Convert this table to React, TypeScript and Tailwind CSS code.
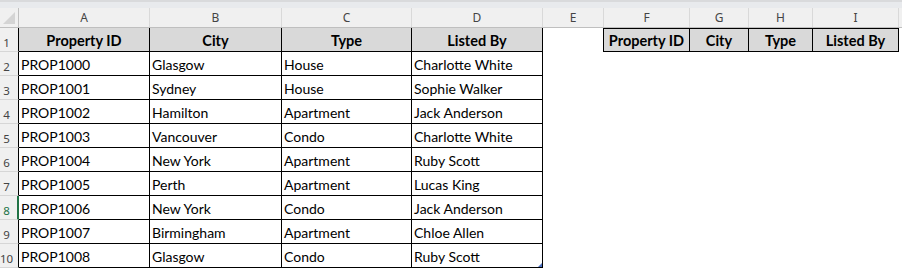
const rows = [
  ["PROP1000", "Glasgow", "House", "Charlotte White"],
  ["PROP1001", "Sydney", "House", "Sophie Walker"],
  ["PROP1002", "Hamilton", "Apartment", "Jack Anderson"],
  ["PROP1003", "Vancouver", "Condo", "Charlotte White"],
  ["PROP1004", "New York", "Apartment", "Ruby Scott"],
  ["PROP1005", "Perth", "Apartment", "Lucas King"],
  ["PROP1006", "New York", "Condo", "Jack Anderson"],
  ["PROP1007", "Birmingham", "Apartment", "Chloe Allen"],
  ["PROP1008", "Glasgow", "Condo", "Ruby Scott"],
];

const letters = [
  { l: "A", w: "w-[131px]" },
  { l: "B", w: "w-[132px]" },
  { l: "C", w: "w-[130px]" },
  { l: "D", w: "w-[131px]" },
  { l: "E", w: "w-[61px]" },
  { l: "F", w: "w-[86px]" },
  { l: "G", w: "w-[59px]" },
  { l: "H", w: "w-[64px]" },
  { l: "I", w: "w-[86px]" },
];

const dataW = ["w-[131px]", "w-[132px]", "w-[130px]", "w-[131px]"];
const headers = ["Property ID", "City", "Type", "Listed By"];
const extraHeaders = [
  { t: "Property ID", w: "w-[86px]" },
  { t: "City", w: "w-[59px]" },
  { t: "Type", w: "w-[64px]" },
  { t: "Listed By", w: "w-[86px]" },
];

const RowNum = ({ n, active }: { n: number; active?: boolean }) => (
  <div
    className={`w-[19px] shrink-0 h-full flex items-center overflow-hidden bg-[#f0f0f0] border-b border-b-[#d6d6d6] ${
      active ? "border-r-2 border-r-[#217346] text-[#217346]" : "border-r border-r-black text-[#444]"
    }`}
  >
    <span className="w-[25px] -ml-[6px] shrink-0 text-center text-[11.5px] pt-[6px] font-['Noto_Sans',sans-serif]">
      {n}
    </span>
  </div>
);

export default function App() {
  return (
    <div className="w-[902px] h-[269px] overflow-hidden bg-white text-black font-['Lato','Liberation_Sans',sans-serif]">
      {/* strip under the formula bar */}
      <div className="h-[8px] bg-[#e8eaed] border-t-2 border-[#d9dadc]" />

      {/* column letters */}
      <div className="flex h-[20px] bg-[#f0f0f0] border-b border-[#bfbfbf]">
        <div className="w-[19px] shrink-0 border-r border-[#bfbfbf] flex items-end justify-end pr-[3px] pb-[3px]">
          <svg width="12" height="12" viewBox="0 0 12 12">
            <polygon points="12,0 12,12 0,12" fill="#d4d4d4" />
          </svg>
        </div>
        {letters.map((c) => (
          <div
            key={c.l}
            className={`${c.w} shrink-0 border-r border-[#d9d9d9] flex items-center justify-center text-[12px] text-[#444] font-['Noto_Sans',sans-serif]`}
          >
            {c.l}
          </div>
        ))}
        <div className="flex-1" />
      </div>

      {/* row 1: headers */}
      <div className="flex h-[24px]">
        <RowNum n={1} />
        {headers.map((h, i) => (
          <div
            key={h}
            className={`${dataW[i]} shrink-0 border-r border-b border-black bg-[#d9d9d9] flex items-center justify-center font-bold text-[14.5px] pt-[2px]`}
          >
            {h}
          </div>
        ))}
        <div className="w-[61px] shrink-0 border-r border-black" />
        {extraHeaders.map((h) => (
          <div
            key={h.t}
            className={`${h.w} shrink-0 border-r border-t border-b border-black bg-[#d9d9d9] flex items-center justify-center font-bold text-[14.5px] pt-[1px]`}
          >
            {h.t}
          </div>
        ))}
        <div className="flex-1" />
      </div>

      {/* data rows */}
      {rows.map((r, ri) => (
        <div key={ri} className="flex h-[24px]">
          <RowNum n={ri + 2} active={ri + 2 === 8} />
          {r.map((v, ci) => (
            <div
              key={ci}
              className={`${dataW[ci]} shrink-0 relative border-r border-b border-black flex items-center pl-[2px] pt-[2px] text-[14px] whitespace-nowrap overflow-hidden`}
            >
              {v}
              {ri === rows.length - 1 && ci === 3 && (
                <svg className="absolute right-0 bottom-0" width="4" height="4" viewBox="0 0 4 4">
                  <polygon points="4,0 4,4 0,4" fill="#4a6fbf" />
                </svg>
              )}
            </div>
          ))}
          <div className="flex-1" />
        </div>
      ))}
    </div>
  );
}
